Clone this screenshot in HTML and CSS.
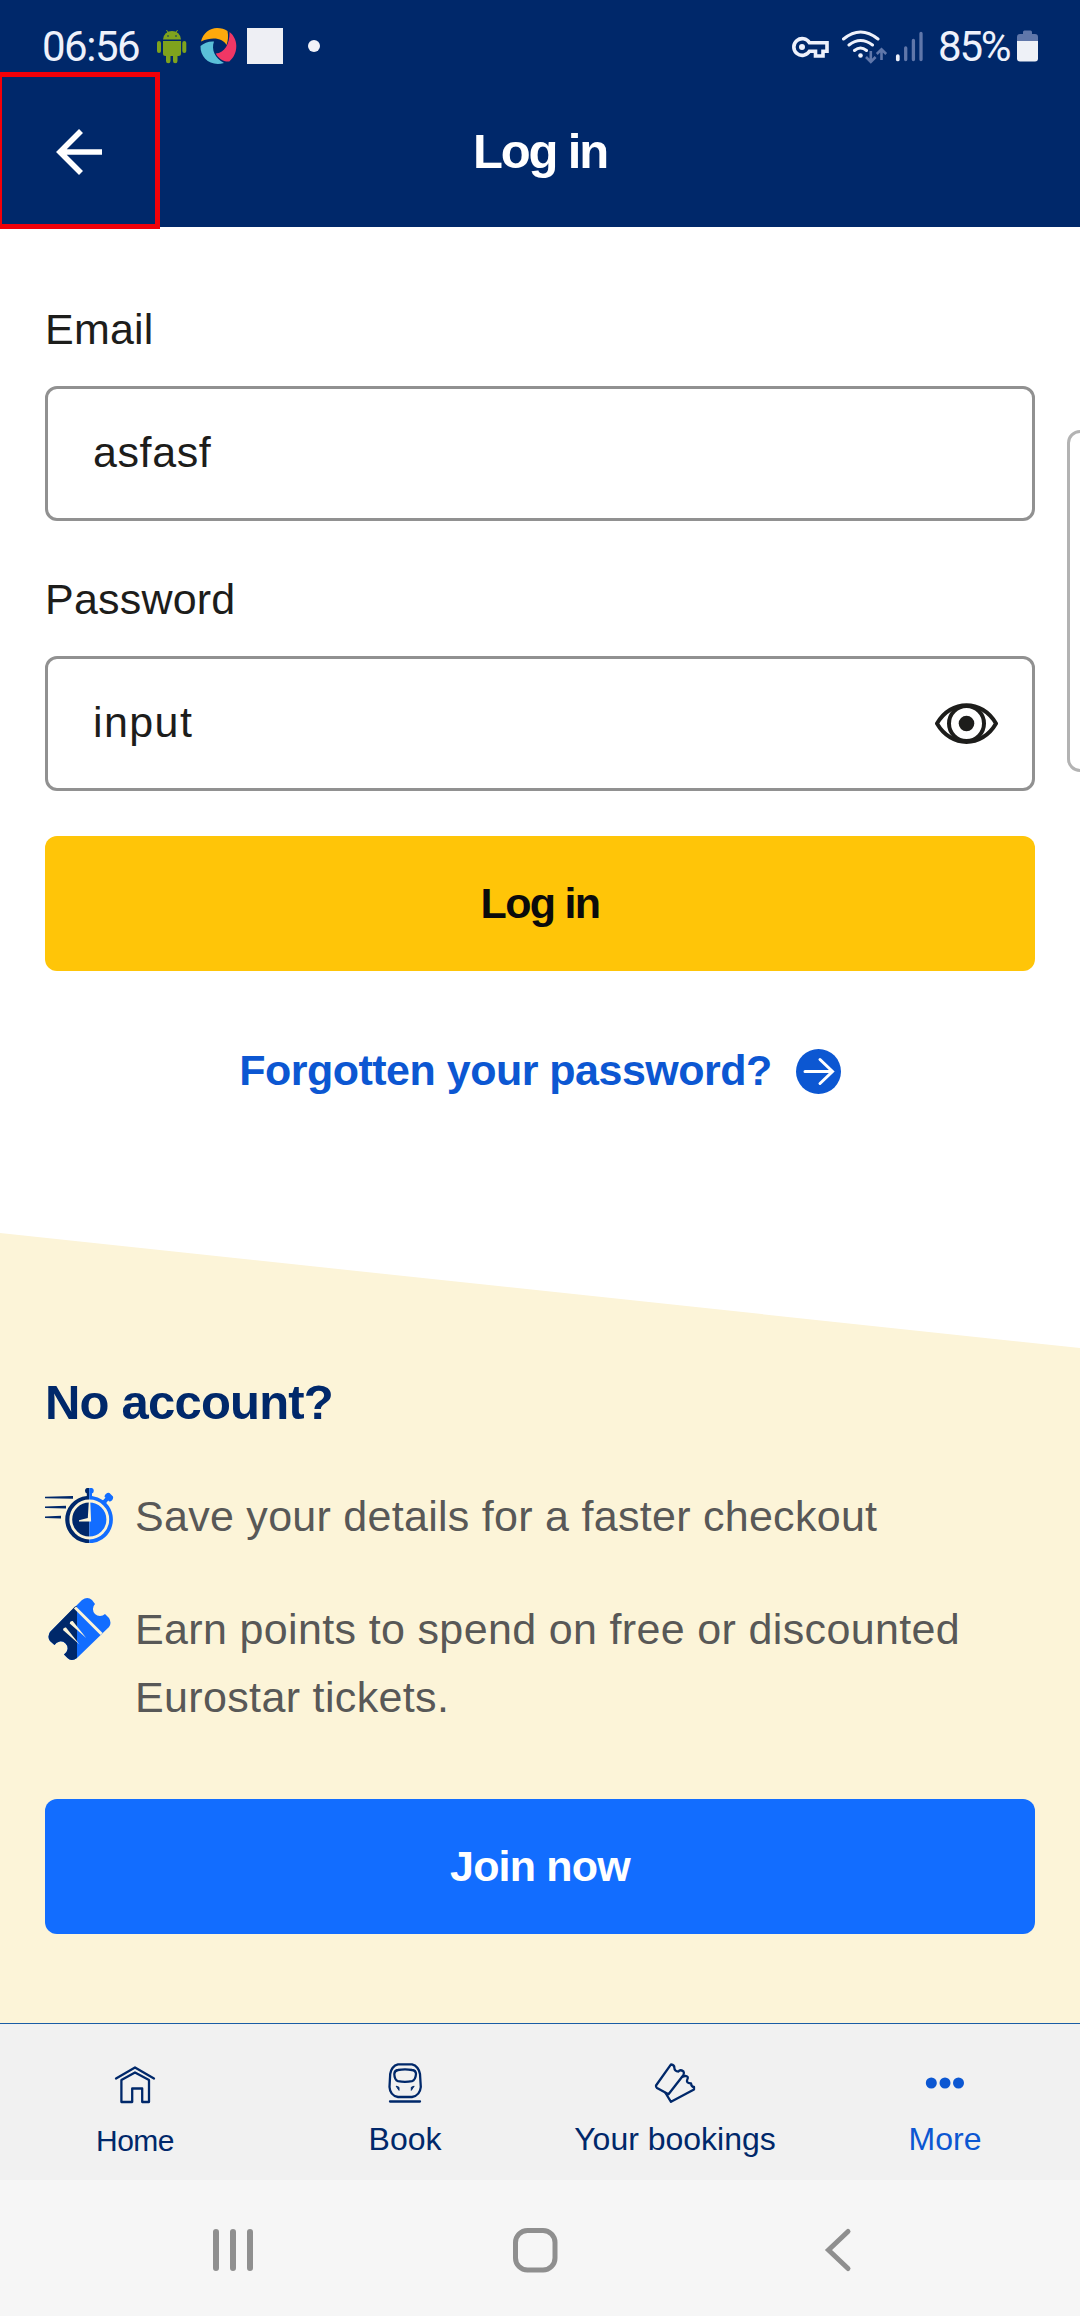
FILE: index.html
```html
<!DOCTYPE html>
<html lang="en">
<head>
<meta charset="utf-8">
<title>Log in</title>
<link rel="stylesheet" href="styles.css">
</head>
<body>
<div class="screen">
  <header class="top">
    <div class="status">
      <span class="clock">06:56</span>
      <svg class="status-left" width="170" height="44" viewBox="152 24 170 44">
        <g fill="#7fa31d">
          <path d="M163 39.500a9 8.500 0 0 1 18 0z"/>
          <path d="M166.500 30l2 3.500M177.500 30l-2 3.500" stroke="#7fa31d" stroke-width="1"/>
          <path d="M163 41h18v12.500a2.500 2.500 0 0 1-2.500 2.500h-1v5a2 2 0 0 1-4.500 0v-5h-2.500v5a2 2 0 0 1-4.500 0v-5h-.5a2.500 2.500 0 0 1-2.500-2.500z"/>
          <rect x="157" y="41" width="4" height="12" rx="2"/>
          <rect x="182.300" y="41" width="4" height="12" rx="2"/>
        </g>
        <circle cx="168" cy="36" r=".8" fill="#00286a"/><circle cx="176" cy="36" r=".8" fill="#00286a"/>
        <path d="M201 41.500C203 33 210 28 217 28c4 0 8 1 10.500 3 1 5 .6 10-1 14C223 39 214 36 201 41.500z" fill="#fda90c"/>
        <path d="M200.500 46C204 43 209 41 214 41.500c-3 8 1 17 10 21.500C211 67 200 58 200.500 46z" fill="#5ac0d8"/>
        <path d="M229.500 32c4 3 6.800 8 6.800 14 0 7-3 12-7 15.500-6 .5-11-3-13.500-8 9-.5 14-10 13.700-21.500z" fill="#f03765"/>
        <rect x="247" y="28" width="36" height="36" fill="#eeeff4"/>
        <circle cx="314" cy="46" r="6" fill="#f1f2f8"/>
      </svg>
      <svg class="status-right" width="138" height="44" viewBox="788 24 138 44" fill="none" stroke="#eef1fb" stroke-width="3">
        <path d="M809.500 42.800A8.400 8.400 0 1 0 809.500 51.200H815.500V56H823V51.200H827V42.800Z" stroke-width="3.600"/>
        <circle cx="802" cy="47" r="3" fill="#eef1fb" stroke="none"/>
        <path d="M843.500 39q17-14 34.500 0M849 45q11.500-9 23.500 0M854.500 50.500q6-5 12 0" stroke-linecap="round"/>
        <circle cx="860.500" cy="55.500" r="2.300" fill="#eef1fb" stroke="none"/>
        <path d="M870.800 51v10.500M866 57l4.800 4.800 4.800-4.800M881.500 60V49.500M876.800 54l4.700-4.700 4.700 4.700" stroke="#6077aa" stroke-width="2.600"/>
        <path d="M897.800 56v3.500" stroke-width="3.700" stroke-linecap="round"/>
        <path d="M905.700 48v11.500M913.400 40.500v19M921 33.500v26" stroke="#6077aa" stroke-width="3.300" stroke-linecap="round"/>
      </svg>
      <span class="battery-level">85%</span>
      <svg class="battery" width="21" height="32" viewBox="0 0 21 32">
        <path d="M6 4V2a1.500 1.500 0 0 1 1.500-1.500h6A1.500 1.500 0 0 1 15 2v2h3a3 3 0 0 1 3 3v4H0V7a3 3 0 0 1 3-3z" fill="#6077aa"/>
        <path d="M0 11h21v17.500a3 3 0 0 1-3 3H3a3 3 0 0 1-3-3z" fill="#eef1f7"/>
      </svg>
    </div>
    <div class="title-bar">
      <h1 class="title">Log in</h1>
      <div class="back">
        <svg width="46" height="46" viewBox="0 0 46 46" fill="none" stroke="#fff" stroke-width="5.600"><path d="M4 23H46M25 2 4 23 25 44"/></svg>
      </div>
    </div>
  </header>

  <main class="form">
    <div class="label">Email</div>
    <div class="field">asfasf</div>
    <div class="label label-next">Password</div>
    <div class="field field-password">input
      <svg class="eye" width="63" height="41" viewBox="0 0 63 41" fill="none" stroke="#1d1d1b" stroke-width="4"><path d="M2 20.500C16-4 47-4 61 20.500 47 45 16 45 2 20.500z"/><circle cx="31.500" cy="20.500" r="17.500"/><circle cx="31.500" cy="20.500" r="7.800" fill="#1d1d1b" stroke="none"/></svg>
    </div>
    <div class="button login">Log in</div>
    <div class="forgot"><span>Forgotten your password?</span>
      <svg width="45" height="45" viewBox="0 0 45 45" fill="none"><circle cx="22.500" cy="22.500" r="22.500" fill="#0c57d2"/><path d="M9 22.500H36M24 10.500 36.500 22.500 24 34.500" stroke="#fff" stroke-width="3" stroke-linecap="round"/></svg>
    </div>
  </main>
  <div class="edge-panel"></div>

  <section class="join">
    <h2 class="join-title">No account?</h2>
    <div class="benefit">
      <svg width="70" height="56" viewBox="45 1487 70 56">
        <path d="M45 1496.800 73 1496v2.800l-28-.6zM45 1506.500l21-.8v2.800l-21-.6zM45 1516.500l16-.8v2.800l-16-.6z" fill="#00286a"/>
        <path d="M89.300 1488v55.200a23.700 23.700 0 0 1-2.500-47.300v-2.400a3 3 0 0 1 0-5.500z" fill="#00286a"/>
        <path d="M89.300 1488H92a3 3 0 0 1 0 5.500v2.400a23.700 23.700 0 0 1 11 4.300l2.500-2.500-1-1a4 4 0 0 1 5-3.700l3.500 3.500a4 4 0 0 1-3.800 5l-1-1-2 2.500a23.700 23.700 0 0 1-16.900 40.200z" fill="#126dff"/>
        <circle cx="89.300" cy="1519.500" r="18.500" fill="none" stroke="#fcf4d8" stroke-width="2.800"/>
        <path d="M88.800 1502h1.500l.8 19.500H79v-1.300l8.800-2.200z" fill="#fcf4d8"/>
      </svg>
      <p>Save your details for a faster checkout</p>
    </div>
    <div class="benefit benefit-two">
      <svg width="64" height="64" viewBox="47 1597 64 64">
        <defs><clipPath id="left"><path d="M47 1597h30v64H47z"/></clipPath></defs>
        <g id="ticket">
          <path d="M82 1600q5.500-4 10 0l3 4a7 7 0 1 0 10 10l4 4q3 5 0 9L77 1658q-5.500 4-9.500 0l-3.500-3.500a7 7 0 1 0-9.500-9.500L50 1641q-3-4 0-9z" fill="#126dff"/>
          <path clip-path="url(#left)" d="M75 1606.500 50 1632q-3 5 0 9l4.500 4a7 7 0 1 1 9.500 9.500l3.500 3.500q4 4 9.500 0V1606z" fill="#00286a"/>
        </g>
        <path d="M75 1607.500 101.500 1634" stroke="#fcf4d8" stroke-width="3"/>
        <path d="M63 1630q0-3 3-2.500l13.500 17zM69.700 1623.500q0-3 3-2.500l13.500 17z" fill="#fcf4d8"/>
      </svg>
      <p>Earn points to spend on free or discounted<br>Eurostar tickets.</p>
    </div>
    <div class="button join-button">Join now</div>
  </section>

  <nav class="tabs">
    <div class="tab tab-home">
      <svg width="44" height="44" viewBox="113 2061 44 44"><path d="M116 2078.500 135 2067.500 154 2078.500M121.400 2102V2080L135 2072.500 149 2080V2102H142.200V2088.500H132.200V2102Z"/></svg>
      <span>Home</span>
    </div>
    <div class="tab">
      <svg width="44" height="44" viewBox="383 2061 44 44"><path d="M398 2064.300H412Q418.500 2066 420 2074L420.800 2087Q420 2095.500 412 2097H398Q390 2095.500 389.500 2087L390.200 2074Q391.500 2066 398 2064.300Z"/><path d="M398 2070Q405 2068.800 412 2070 416 2070.500 416 2074 415.500 2080 412 2081.200 405 2082.500 398 2081.200 394.500 2080 394.300 2074 394.500 2070.500 398 2070ZM390 2101.500H420"/><path d="M396.500 2086.300 399 2087.300V2090ZM413.800 2086.300 411.300 2087.300V2090Z" stroke-width=".8" fill="#00286a" class="lamps"/></svg>
      <span>Book</span>
    </div>
    <div class="tab">
      <svg width="44" height="44" viewBox="653 2061 44 44"><path d="M671 2064.300 656 2085.500Q655.700 2087 657 2088L668.500 2094.300 683.500 2075Q684.300 2072.500 683.500 2071.500 680 2069 678.500 2071.500 674.500 2071.500 674.300 2067.500 674.500 2065 671 2064.300Z"/><path d="M665.500 2093 671 2101.800 694 2089.500V2087Q691.500 2087 691 2083.500 685.500 2083 687.300 2079.500 689 2076.500 685.500 2075.800L682 2077"/></svg>
      <span>Your bookings</span>
    </div>
    <div class="tab tab-active">
      <svg width="44" height="44" viewBox="923 2061 44 44"><g fill="#0c57d2" stroke="none"><circle cx="931.300" cy="2083" r="5.500"/><circle cx="945" cy="2083" r="5.500"/><circle cx="958.500" cy="2083" r="5.500"/></g></svg>
      <span>More</span>
    </div>
  </nav>

  <footer class="system">
    <svg width="42" height="46" viewBox="0 0 42 46" stroke="#8f8f8f" stroke-width="6" stroke-linecap="round"><path d="M4 5V41M21 5V41M38 5V41"/></svg>
    <svg width="46" height="46" viewBox="0 0 46 46" fill="none" stroke="#8f8f8f" stroke-width="5"><rect x="3.500" y="3.500" width="39.500" height="39.500" rx="12"/></svg>
    <svg class="system-back" width="28" height="46" viewBox="0 0 28 46" fill="none" stroke="#8f8f8f" stroke-width="5" stroke-linecap="round"><path d="M24 4.500 4.500 23 24 41.500"/></svg>
  </footer>
</div>
</body>
</html>
```
FILE: styles.css
```css
* { box-sizing: border-box; margin: 0; padding: 0; }
body {
  width: 1080px;
  height: 2316px;
  overflow: hidden;
  background: #fff;
  color: #1d1d1b;
  font: 43px/50px "Liberation Sans", Arial, sans-serif;
}
svg { display: block; flex: none; }
.screen {
  position: relative;
  display: flex;
  flex-direction: column;
  width: 1080px;
  height: 2316px;
  overflow: hidden;
}

/* Header */
.top { height: 227px; background: #00286a; color: #fff; }
.status {
  display: flex;
  align-items: center;
  height: 76px;
  padding: 16px 42px 0 42px;
  color: #eef1fb;
  font: 42px/44px Roboto, sans-serif;
}
.clock { width: 110px; padding-top: 1px; letter-spacing: -1.5px; }
.status-left { margin-top: -0.5px; }
.status-right { margin-left: auto; }
.battery-level { width: 79px; padding: 1px 0 0 12px; letter-spacing: -2.2px; white-space: nowrap; }
.battery { margin-left: 12px; }
.title-bar { display: flex; align-items: center; justify-content: center; height: 151px; padding-bottom: 2px; }
.title { font-size: 49px; line-height: 60px; letter-spacing: -2.2px; }
.back {
  position: absolute;
  left: -3px;
  top: 72px;
  display: flex;
  align-items: center;
  width: 163px;
  height: 157px;
  padding: 3px 0 0 54px;
  border: 5px solid #f20008;
}

/* Log in form */
.form { height: 1006px; padding: 77px 45px 0; }
.label { margin-bottom: 32px; letter-spacing: 0.2px; }
.label-next { margin-top: 53px; }
.field {
  display: flex;
  align-items: center;
  justify-content: space-between;
  height: 135px;
  padding: 0 34px 3px 45px;
  border: 3px solid #919191;
  border-radius: 12px;
  letter-spacing: 0.6px;
}
.field-password { letter-spacing: 1.4px; }
.eye { margin-top: 3px; }
.button {
  display: flex;
  align-items: center;
  justify-content: center;
  height: 135px;
  padding-bottom: 2px;
  border-radius: 12px;
  font-weight: bold;
}
.login { margin-top: 45px; background: #ffc508; color: #0b0b0b; letter-spacing: -1.7px; }
.forgot {
  display: flex;
  align-items: center;
  justify-content: center;
  gap: 24px;
  margin-top: 76px;
  color: #0c57d2;
  font-weight: bold;
  letter-spacing: -0.5px;
}
.forgot span { margin-top: -2px; }
.edge-panel {
  position: absolute;
  left: 1067px;
  top: 430px;
  width: 40px;
  height: 342px;
  border: 3px solid #b3b3b3;
  border-radius: 13px;
}

/* Account promotion */
.join {
  height: 790px;
  padding: 139px 45px 0;
  background: #fcf4d8;
  clip-path: polygon(0 0, 100% 115px, 100% 100%, 0 100%);
}
.join-title { margin-bottom: 51px; color: #00286a; font-size: 49px; line-height: 60px; letter-spacing: -0.8px; }
.benefit { display: flex; color: #585857; line-height: 67px; letter-spacing: 0.28px; white-space: nowrap; }
.benefit svg { margin-top: 4px; }
.benefit p { margin-left: 20px; }
.benefit-two { margin-top: 46px; line-height: 67.5px; letter-spacing: 0.35px; }
.benefit-two svg { margin: 1px 0 0 2px; }
.benefit-two p { margin-left: 24px; }
.join-button { margin-top: 68px; background: #126dff; color: #fff; letter-spacing: -0.8px; }

/* Tab bar */
.tabs {
  display: grid;
  grid-template-columns: repeat(4, 1fr);
  height: 157px;
  border-top: 1px solid #1a5ca5;
  background: #f1f1f1;
}
.tab {
  display: flex;
  flex-direction: column;
  align-items: center;
  padding-top: 37px;
  color: #00286a;
  font-size: 32px;
  line-height: 40px;
}
.tab svg { margin-bottom: 14px; fill: none; stroke: #00286a; stroke-width: 2.3px; stroke-linejoin: round; stroke-linecap: round; }
.tab svg .lamps { stroke-width: 1px; }
.tab-home { font-size: 30px; letter-spacing: -0.5px; }
.tab-home svg { margin-bottom: 16px; }
.tab-active { color: #0c57d2; }

/* System navigation */
.system {
  display: flex;
  align-items: center;
  gap: 258px;
  height: 136px;
  padding: 4px 0 0 212px;
  background: #f6f6f6;
}
.system-back { margin-left: 8px; }
```
